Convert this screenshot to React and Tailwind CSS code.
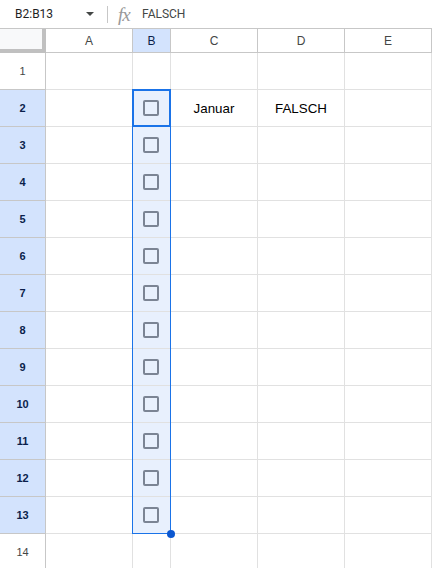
import React from 'react';

const columns = ['A', 'B', 'C', 'D', 'E'];
const rows = Array.from({ length: 14 }, (_, i) => i + 1);

const Checkbox = () => (
  <span className="block w-4 h-4 mr-px border-2 border-[#7b8494] rounded-[2px]" />
);

const Cell = ({ row, col }) => {
  const selected = col === 'B' && row >= 2 && row <= 13;
  return (
    <div
      className={`flex items-center justify-center text-[13.33px] text-black border-r border-b border-[#e1e1e1] ${
        selected ? 'bg-[#e8f0fd]' : 'bg-white'
      }`}
    >
      {selected && <Checkbox />}
      {row === 2 && col === 'C' && <span className="pt-px">Januar</span>}
      {row === 2 && col === 'D' && <span className="pt-px">FALSCH</span>}
    </div>
  );
};

const App = () => {
  return (
    <div className="w-[432px] h-[568px] overflow-hidden bg-white font-['Liberation_Sans',Arial,sans-serif]">
      <div className="flex items-center h-[29px] border-b border-[#c7c7c7] font-['Roboto',sans-serif]">
        <span className="w-[70px] pl-[15px] text-[12px] text-[#1f1f1f]">B2:B13</span>
        <svg width="8" height="4" viewBox="0 0 8 4" className="ml-[16px]">
          <path d="M0 0h8L4 4z" fill="#444746" />
        </svg>
        <span className="w-px h-[17px] bg-[#c7c7c7] ml-[13px]" />
        <span className="ml-[10px] w-[15px] font-['Liberation_Serif',serif] italic text-[19px] leading-none tracking-[-1px] text-[#999999]">
          fx
        </span>
        <span className="ml-[9px] text-[12px] text-[#444746]">FALSCH</span>
      </div>

      <div className="relative grid grid-cols-[46px_87px_38px_87px_87px_87px] grid-rows-[24px_repeat(14,37px)]">
        <div className="bg-[#f8f9fa] border-r-4 border-b-4 border-[#c0c0c0]" />
        {columns.map((col) => (
          <div
            key={col}
            className={`flex items-center justify-center text-[12px] border-r border-b border-[#c7c7c7] ${
              col === 'B' ? 'bg-[#d3e3fd] text-[#0b1f4b]' : 'bg-white text-[#444746]'
            }`}
          >
            {col}
          </div>
        ))}

        {rows.map((row) => {
          const active = row >= 2 && row <= 13;
          return (
            <React.Fragment key={row}>
              <div
                className={`flex items-center justify-center text-[11px] border-r border-b ${
                  active
                    ? 'bg-[#d3e3fd] text-[#0b1f4b] font-bold border-[#c7c7c7]'
                    : 'bg-white text-[#444746] border-[#c7c7c7]'
                }`}
              >
                {row}
              </div>
              {columns.map((col) => (
                <Cell key={col} row={row} col={col} />
              ))}
            </React.Fragment>
          );
        })}

        {/* selection range and active cell */}
        <div className="absolute left-[132px] top-[60px] w-[39px] h-[445px] border border-[#1a73e8] pointer-events-none" />
        <div className="absolute left-[132px] top-[60px] w-[39px] h-[38px] border-2 border-[#1a73e8] pointer-events-none" />
        <div className="absolute left-[167px] top-[501px] w-2 h-2 rounded-full bg-[#0b57d0]" />
      </div>
    </div>
  );
};

export default App;
